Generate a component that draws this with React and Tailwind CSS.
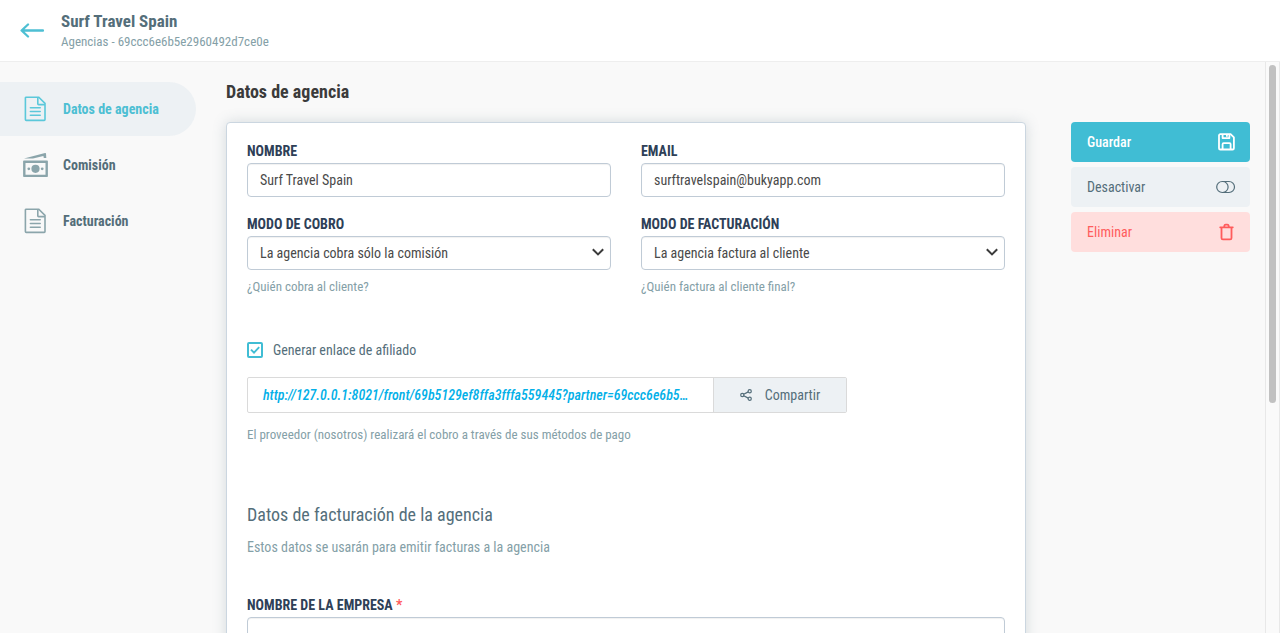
import React, { useState } from "react";

const DocumentIcon = () => (
  <svg viewBox="0 0 24 26" className="w-6 h-[26px]" fill="none" stroke="currentColor" strokeWidth="1.6">
    <path d="M2.2 1.2H14.8L21 7.4V23.6a.8.8 0 0 1-.8.8H2.2a.8.8 0 0 1-.8-.8V2a.8.8 0 0 1 .8-.8Z" />
    <path d="M13.8 1.4V7.8a.8.8 0 0 0 .8.8H21" />
    <path d="M6.4 11.8H16.2M6.4 15.5H16.2M6.4 19.2H16.2" strokeLinecap="round" />
  </svg>
);

const MoneyIcon = () => (
  <svg viewBox="0 0 26 26" className="w-[26px] h-[26px]" fill="currentColor">
    <path d="M1 6.4 22 1a.8.8 0 0 1 1 .6L23.3 6H20.8L20.4 4 10 6.4Z" />
    <path
      fillRule="evenodd"
      d="M.9 8.4H24.1a.8.8 0 0 1 .8.8V24.2a.8.8 0 0 1-.8.8H.9a.8.8 0 0 1-.8-.8V9.2a.8.8 0 0 1 .8-.8ZM2.5 11V22.8H22.5V11Z"
    />
    <circle cx="12.5" cy="16.8" r="4.1" />
    <circle cx="5.8" cy="16.8" r="1.4" />
    <circle cx="19.2" cy="16.8" r="1.4" />
  </svg>
);

const BackIcon = () => (
  <svg viewBox="0 0 24 16" className="w-6 h-4" fill="none" stroke="currentColor" strokeWidth="2.3" strokeLinecap="round" strokeLinejoin="round">
    <path d="M8 1.5 1.6 7.5 8 13.5M2 7.5H23" />
  </svg>
);

const SaveIcon = () => (
  <svg viewBox="0 0 18 18" className="w-[18px] h-[18px]" fill="none" stroke="currentColor" strokeWidth="1.8" strokeLinejoin="round">
    <path d="M2.3 1.2H12.6L15.9 4.4V15.2a1.3 1.3 0 0 1-1.3 1.3H2.3A1.3 1.3 0 0 1 1 15.2V2.5a1.3 1.3 0 0 1 1.3-1.3Z" />
    <path d="M4.6 1.4V5.1H11.4V1.4M4.6 16.3V11.2a1 1 0 0 1 1-1H11.6a1 1 0 0 1 1 1V16.3M8.9 2V3.8" />
  </svg>
);

const ToggleIcon = () => (
  <svg viewBox="0 0 20 14" className="w-5 h-[14px]" fill="none" stroke="currentColor" strokeWidth="1.2">
    <rect x=".7" y="1.5" width="17.8" height="11" rx="5.5" />
    <path d="M6.6 1.5a5.5 5.5 0 0 1 0 11" />
  </svg>
);

const TrashIcon = () => (
  <svg viewBox="0 0 16 18" className="w-4 h-[18px] mr-px" fill="none" stroke="currentColor" strokeWidth="1.8" strokeLinejoin="round">
    <path d="M1.2 4.3H13.8" strokeLinecap="round" />
    <path d="M2.5 4.3V15a1.4 1.4 0 0 0 1.4 1.4h7.2A1.4 1.4 0 0 0 12.5 15V4.3M5.3 4V2.9A1.4 1.4 0 0 1 6.7 1.7H8.3A1.4 1.4 0 0 1 9.7 2.9V4" />
  </svg>
);

const ShareIcon = () => (
  <svg viewBox="0 0 12 12" className="w-3 h-3" fill="none" stroke="currentColor" strokeWidth="1.2">
    <circle cx="2.3" cy="6" r="1.6" />
    <circle cx="9.7" cy="2.2" r="1.6" />
    <circle cx="9.7" cy="9.8" r="1.6" />
    <path d="M3.7 5.3 8.3 2.9M3.7 6.7 8.3 9.1" />
  </svg>
);

const menu = [
  { id: "datos", label: "Datos de agencia", icon: <DocumentIcon /> },
  { id: "comision", label: "Comisión", icon: <MoneyIcon /> },
  { id: "facturacion", label: "Facturación", icon: <DocumentIcon /> },
];

const fieldClass =
  "block w-full h-[34px] px-3 rounded border border-[#c0cbd6] bg-white text-[14px] text-[#4a4a4a] outline-none shadow-[inset_0_1px_1px_rgba(0,0,0,0.06)]";

const Label = ({ htmlFor, required, children }) => (
  <label htmlFor={htmlFor} className="block mb-1 text-[14px] leading-4 font-bold uppercase text-[#2e4057]">
    {children}
    {required && <span className="text-[#ff5c5c]"> *</span>}
  </label>
);

const Help = ({ children }) => (
  <p className="text-[13px] leading-4 text-[#84a0a7]">{children}</p>
);

const Select = ({ id, label, options, help }) => (
  <div>
    <Label htmlFor={id}>{label}</Label>
    <div className="relative mb-[9px]">
      <select id={id} className={`${fieldClass} appearance-none`}>
        {options.map((option) => (
          <option key={option}>{option}</option>
        ))}
      </select>
      <svg
        viewBox="0 0 12 8"
        className="absolute right-[7px] top-3 w-3 h-2 pointer-events-none text-[#3b3b3b]"
        fill="none"
        stroke="currentColor"
        strokeWidth="2"
      >
        <path d="M.8 1.2 6 6.4 11.2 1.2" />
      </svg>
    </div>
    <Help>{help}</Help>
  </div>
);

const App = () => {
  const [active, setActive] = useState("datos");
  const [affiliate, setAffiliate] = useState(true);

  return (
    <div className="flex flex-col h-screen overflow-hidden bg-[#f9f9f9] font-['Roboto_Condensed','Liberation_Sans_Narrow',Roboto,sans-serif]">
      <header className="flex items-center shrink-0 gap-[17px] px-5 py-[10px] bg-white border-b border-[#eeeeee]">
        <a href="#agencias" aria-label="Volver" className="text-[#4dbfd3]">
          <BackIcon />
        </a>
        <div>
          <h1 className="text-[17px] leading-[22px] font-bold text-[#546e7a]">Surf Travel Spain</h1>
          <p className="text-[13px] leading-[19px] text-[#84a0a7]">Agencias - 69ccc6e6b5e2960492d7ce0e</p>
        </div>
      </header>

      <div className="flex flex-1 min-h-0">
        <nav className="flex flex-col gap-[2px] shrink-0 w-[196px] pt-5">
          {menu.map((item) => (
            <a
              key={item.id}
              href={`#${item.id}`}
              onClick={() => setActive(item.id)}
              className={`flex items-center gap-[14px] h-[54px] pl-[23px] rounded-r-full text-[14px] font-bold ${
                active === item.id ? "bg-[#edf1f4] text-[#4dbfd3]" : "text-[#546e7a]"
              }`}
            >
              <span
                className={`flex justify-center w-[26px] ${
                  active === item.id ? "text-[#5bc8da]" : "text-[#8ba5ab]"
                }`}
              >
                {item.icon}
              </span>
              {item.label}
            </a>
          ))}
        </nav>

        <main className="flex-1 min-w-0 pl-[30px] pr-[45px] pt-[18px]">
          <h2 className="mb-[18px] text-[18px] leading-6 font-bold text-[#3b3b3b]">Datos de agencia</h2>

          <form className="p-5 rounded border border-[#cbd6e0] bg-white shadow-[0_0_14px_rgba(84,110,122,0.22)]">
            <div className="grid grid-cols-2 gap-x-[30px] gap-y-[19px]">
              <div>
                <Label htmlFor="nombre">Nombre</Label>
                <input id="nombre" type="text" defaultValue="Surf Travel Spain" className={fieldClass} />
              </div>
              <div>
                <Label htmlFor="email">Email</Label>
                <input id="email" type="email" defaultValue="surftravelspain@bukyapp.com" className={fieldClass} />
              </div>
              <Select
                id="cobro"
                label="Modo de cobro"
                options={["La agencia cobra sólo la comisión"]}
                help="¿Quién cobra al cliente?"
              />
              <Select
                id="modo-facturacion"
                label="Modo de facturación"
                options={["La agencia factura al cliente"]}
                help="¿Quién factura al cliente final?"
              />
            </div>

            <label className="flex items-center w-fit mt-[45px] text-[14px] leading-5 text-[#546e7a]">
              <span className="relative w-4 h-4 mr-[10px]">
                <input
                  type="checkbox"
                  checked={affiliate}
                  onChange={(e) => setAffiliate(e.target.checked)}
                  className="block w-4 h-4 appearance-none rounded-xs border-2 border-[#40bdd4] bg-white"
                />
                {affiliate && (
                  <svg
                    viewBox="0 0 16 16"
                    className="absolute inset-0 w-4 h-4 pointer-events-none text-[#40bdd4]"
                    fill="none"
                    stroke="currentColor"
                    strokeWidth="1.9"
                  >
                    <path d="M4 7.6 7 10.6 12.2 5.2" />
                  </svg>
                )}
              </span>
              Generar enlace de afiliado
            </label>

            <div className="flex max-w-[600px] h-9 mt-[17px] mb-[14px] rounded-xs border border-[#dadada]">
              <a
                href="http://127.0.0.1:8021/front/69b5129ef8ffa3fffa559445?partner=69ccc6e6b5e2960492d7ce0e"
                className="flex-1 min-w-0 pl-[15px] text-[14px] leading-[34px] italic font-medium text-[#03b0e8] whitespace-nowrap"
              >
                http://127.0.0.1:8021/front/69b5129ef8ffa3fffa559445?partner=69ccc6e6b5…
              </a>
              <button
                type="button"
                className="flex items-center justify-center gap-[13px] w-[133px] border-l border-[#dadada] bg-[#edf1f4] text-[14px] text-[#546e7a]"
              >
                <ShareIcon />
                Compartir
              </button>
            </div>
            <Help>El proveedor (nosotros) realizará el cobro a través de sus métodos de pago</Help>

            <h3 className="mt-[60px] mb-3 text-[18px] leading-6 text-[#546e7a]">Datos de facturación de la agencia</h3>
            <p className="mb-[42px] text-[14px] leading-4 text-[#84a0a7]">
              Estos datos se usarán para emitir facturas a la agencia
            </p>

            <Label htmlFor="empresa" required>
              Nombre de la empresa
            </Label>
            <input id="empresa" type="text" required className={fieldClass} />
          </form>
        </main>

        <aside className="flex flex-col gap-[5px] shrink-0 w-[179px] mt-[60px] mr-[15px]">
          <button className="flex items-center justify-between h-10 pl-4 pr-[14px] rounded bg-[#40bdd4] text-[14px] font-medium text-white">
            Guardar
            <SaveIcon />
          </button>
          <button className="flex items-center justify-between h-10 pl-4 pr-[14px] rounded bg-[#edf1f4] text-[14px] text-[#546e7a]">
            Desactivar
            <ToggleIcon />
          </button>
          <button className="flex items-center justify-between h-10 pl-4 pr-[14px] rounded bg-[#ffdedd] text-[14px] text-[#ff5c5c]">
            Eliminar
            <TrashIcon />
          </button>
        </aside>

        {/* scrollbar */}
        <div className="shrink-0 w-[15px] pt-[3px] px-[3px] border-x border-[#e8e8e8] bg-[#fafafa]">
          <div className="h-[338px] rounded-full bg-[#c1c1c1]" />
        </div>
      </div>
    </div>
  );
};

export default App;
